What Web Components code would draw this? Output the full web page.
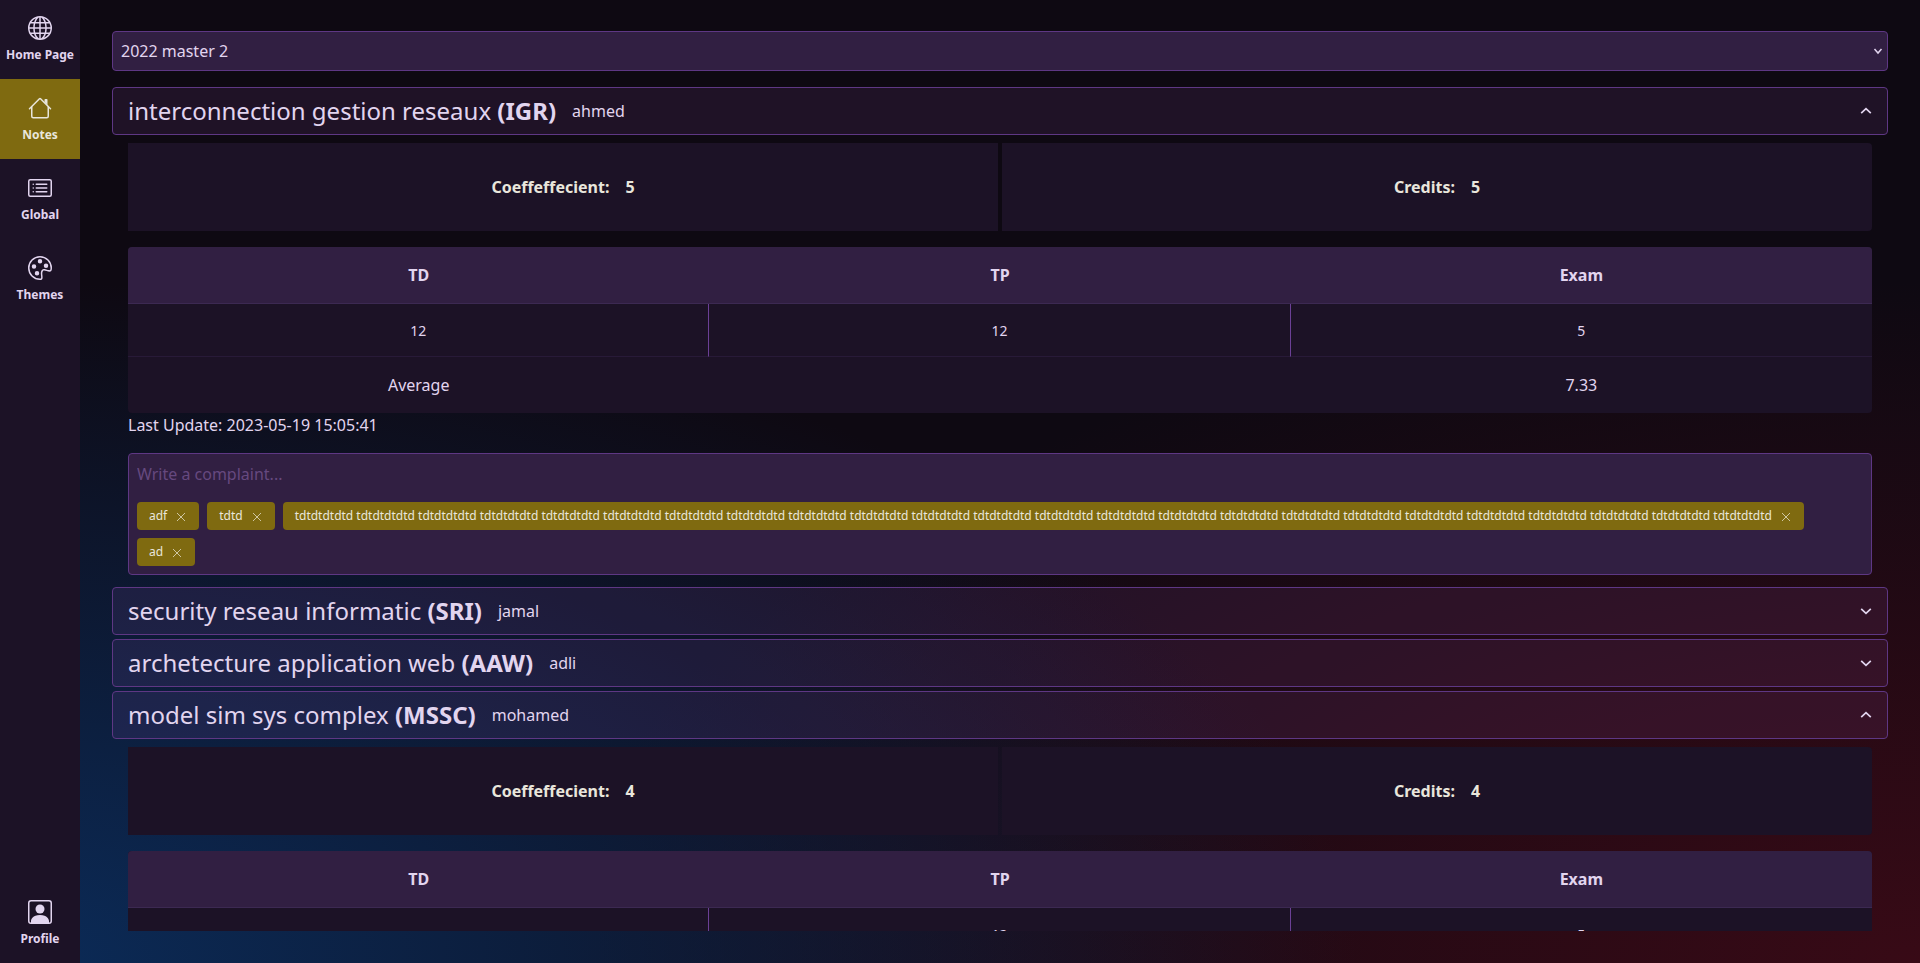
<!DOCTYPE html>
<html lang="en">
<head>
<meta charset="utf-8">
<title>Notes</title>
<style>
html, body { margin: 0; height: 100%; }
body {
  --panel: #1c1226;
  --raised: #311f42;
  --line: #5e3784;
  --accent: #7f6a10;
  --ink: #e2d5ef;
  --ink-light: #e9e6dc;
  font-family: "Noto Sans", sans-serif;
  font-size: 16px;
  line-height: 24px;
  color: var(--ink);
}
</style>
</head>
<body>
<notes-app></notes-app>
<script>
const ICONS = {
  globe: '<path d="M0 8a8 8 0 1 1 16 0A8 8 0 0 1 0 8zm7.5-6.923c-.67.204-1.335.82-1.887 1.855A7.97 7.97 0 0 0 5.145 4H7.5V1.077zM4.09 4a9.267 9.267 0 0 1 .64-1.539 6.7 6.7 0 0 1 .597-.933A7.025 7.025 0 0 0 2.255 4H4.09zm-.582 3.5c.03-.877.138-1.718.312-2.5H1.674a6.958 6.958 0 0 0-.656 2.5h2.49zM4.847 5a12.5 12.5 0 0 0-.338 2.5H7.5V5H4.847zM8.5 5v2.5h2.99a12.495 12.495 0 0 0-.337-2.5H8.5zM4.51 8.5a12.5 12.5 0 0 0 .337 2.5H7.5V8.5H4.51zm3.99 0V11h2.653c.187-.765.306-1.608.338-2.5H8.5zM5.145 12c.138.386.295.744.468 1.068.552 1.035 1.218 1.65 1.887 1.855V12H5.145zm.182 2.472a6.696 6.696 0 0 1-.597-.933A9.268 9.268 0 0 1 4.09 12H2.255a7.024 7.024 0 0 0 3.072 2.472zM3.82 11a13.652 13.652 0 0 1-.312-2.5h-2.49c.062.89.291 1.733.656 2.5H3.82zm6.853 3.472A7.024 7.024 0 0 0 13.745 12H11.91a9.27 9.27 0 0 1-.64 1.539 6.688 6.688 0 0 1-.597.933zM8.5 12v2.923c.67-.204 1.335-.82 1.887-1.855.173-.324.33-.682.468-1.068H8.5zm3.68-1h2.146c.365-.767.594-1.61.656-2.5h-2.49a13.65 13.65 0 0 1-.312 2.5zm2.802-3.5a6.959 6.959 0 0 0-.656-2.5H12.18c.174.782.282 1.623.312 2.5h2.49zM11.27 2.461c.247.464.462.98.64 1.539h1.835a7.024 7.024 0 0 0-3.072-2.472c.218.284.418.598.597.933zM10.855 4a7.966 7.966 0 0 0-.468-1.068C9.835 1.897 9.17 1.282 8.5 1.077V4h2.355z"/>',
  house: '<path fill-rule="evenodd" d="M2 13.5V7h1v6.5a.5.5 0 0 0 .5.5h9a.5.5 0 0 0 .5-.5V7h1v6.5a1.5 1.5 0 0 1-1.5 1.5h-9A1.5 1.5 0 0 1 2 13.5zm11-11V6l-2-2V2.500a.5.5 0 0 1 .5-.5h1a.5.5 0 0 1 .5.5z"/><path fill-rule="evenodd" d="M7.293 1.500a1 1 0 0 1 1.414 0l6.647 6.646a.5.5 0 0 1-.708.708L8 2.207 1.354 8.854a.5.5 0 1 1-.708-.708L7.293 1.500z"/>',
  list: '<path d="M14.500 3a.5.5 0 0 1 .5.5v9a.5.5 0 0 1-.5.5h-13a.5.5 0 0 1-.5-.5v-9a.5.5 0 0 1 .5-.5h13zm-13-1A1.500 1.500 0 0 0 0 3.500v9A1.500 1.500 0 0 0 1.500 14h13a1.500 1.500 0 0 0 1.500-1.500v-9A1.500 1.500 0 0 0 14.500 2h-13z"/><path d="M5 8a.5.5 0 0 1 .5-.5h7a.5.5 0 0 1 0 1h-7A.5.5 0 0 1 5 8zm0-2.500a.5.5 0 0 1 .5-.5h7a.5.5 0 0 1 0 1h-7a.5.5 0 0 1-.5-.5zm0 5a.5.5 0 0 1 .5-.5h7a.5.5 0 0 1 0 1h-7a.5.5 0 0 1-.5-.5zm-1-5a.5.5 0 1 1-1 0 .5.5 0 0 1 1 0zM4 8a.5.5 0 1 1-1 0 .5.5 0 0 1 1 0zm0 2.500a.5.5 0 1 1-1 0 .5.5 0 0 1 1 0z"/>',
  palette: '<path d="M8 5a1.500 1.500 0 1 0 0-3 1.500 1.500 0 0 0 0 3zm4 3a1.500 1.500 0 1 0 0-3 1.500 1.500 0 0 0 0 3zM5.500 7a1.500 1.500 0 1 1-3 0 1.500 1.500 0 0 1 3 0zm.5 6a1.500 1.500 0 1 0 0-3 1.500 1.500 0 0 0 0 3z"/><path d="M16 8c0 3.150-1.866 2.585-3.567 2.070C11.420 9.763 10.465 9.473 10 10c-.603.683-.475 1.819-.351 2.920C9.826 14.495 9.996 16 8 16a8 8 0 1 1 8-8zm-8 7c.611 0 .654-.171.655-.176.078-.146.124-.464.070-1.119-.014-.168-.037-.370-.061-.591-.052-.464-.112-1.005-.118-1.462-.010-.707.083-1.610.704-2.314.369-.417.845-.578 1.272-.618.404-.038.812.026 1.160.104.343.077.702.186 1.025.284l.028.008c.346.105.658.199.953.266.653.148.904.083.991.024C14.717 9.380 15 9.161 15 8a7 7 0 1 0-7 7z"/>',
  person: '<path d="M11 6a3 3 0 1 1-6 0 3 3 0 0 1 6 0z"/><path d="M2 0a2 2 0 0 0-2 2v12a2 2 0 0 0 2 2h12a2 2 0 0 0 2-2V2a2 2 0 0 0-2-2H2zm12 1a1 1 0 0 1 1 1v12a1 1 0 0 1-1 1v-1c0-1-1-4-6-4s-6 3-6 4v1a1 1 0 0 1-1-1V2a1 1 0 0 1 1-1h12z"/>'
};

const define = (name, render, ready) => customElements.define(name, class extends HTMLElement {
  connectedCallback() {
    if (this.shadowRoot) return;
    this.attachShadow({ mode: 'open' }).innerHTML = render(this);
    if (ready) ready(this, this.shadowRoot);
  }
});

define('nav-item', el => `
<style>
:host { display: block; }
a {
  box-sizing: border-box; height: 80px; padding-top: 17px;
  display: flex; flex-direction: column; align-items: center; gap: 7px;
  color: var(--ink); text-decoration: none; font-size: 12px; line-height: 16px; font-weight: 700; white-space: nowrap;
}
:host([active]) a { background: var(--accent); color: var(--ink-light); }
svg { width: 24px; height: 24px; display: block; }
</style>
<a href="#${el.getAttribute('icon')}"><svg viewBox="0 0 16 16" fill="currentColor" aria-hidden="true">${ICONS[el.getAttribute('icon')]}</svg><slot></slot></a>`);

define('side-nav', () => `
<style>
:host { display: block; flex: none; width: 80px; background: var(--panel); }
nav { height: 100%; display: flex; flex-direction: column; justify-content: space-between; }
div { margin-top: -1px; }
</style>
<nav aria-label="Main"><div><slot></slot></div><slot name="end"></slot></nav>`);

define('year-select', () => `
<style>
:host { display: grid; align-items: center; }
select, svg { grid-area: 1 / 1; }
select {
  appearance: none; box-sizing: border-box; width: 100%; height: 40px; margin: 0; padding: 0 24px 0 8px;
  font: inherit; color: var(--ink); background: var(--raised);
  border: 1px solid var(--line); border-radius: 4px;
}
svg { width: 10px; height: 10px; margin-right: 5px; justify-self: end; pointer-events: none; fill: none; stroke: var(--ink); stroke-width: 1.5; }
</style>
<select aria-label="Year"><option>2022 master 2</option></select>
<svg viewBox="0 0 10 10" aria-hidden="true"><path d="M1.500 3 5 7l3.500-4"/></svg>`);

define('course-panel', el => `
<style>
:host { display: block; }
button {
  box-sizing: border-box; width: 100%; height: 48px; margin: 0; padding: 0 15px;
  display: flex; align-items: center; gap: 16px;
  font: inherit; color: inherit; text-align: left;
  background: rgba(190, 100, 215, .1); border: 1px solid var(--line); border-radius: 4px;
}
.title { font-size: 24px; line-height: 34px; }
svg { width: 12px; height: 12px; margin-left: auto; fill: none; stroke: currentColor; stroke-width: 1.7; }
:host([open]) svg { transform: rotate(180deg); }
.body { display: none; padding: 8px 16px; }
:host([open]) .body { display: block; }
</style>
<button type="button" aria-expanded="${el.hasAttribute('open')}">
  <span class="title">${el.getAttribute('name')} <b>(${el.getAttribute('code')})</b></span>
  <span>${el.getAttribute('teacher')}</span>
  <svg viewBox="0 0 12 12" aria-hidden="true"><path d="M1.200 3.800 6 8.300l4.800-4.500"/></svg>
</button>
<div class="body"><slot></slot></div>`,
(el, root) => root.querySelector('button').addEventListener('click', e => {
  e.currentTarget.setAttribute('aria-expanded', el.toggleAttribute('open'));
}));

define('course-facts', el => `
<style>
:host { display: grid; grid-template-columns: 1fr 1fr; gap: 4px; margin-bottom: 16px; }
div {
  padding: 32px 0; display: flex; justify-content: center; gap: 16px;
  background: var(--panel); color: var(--ink-light); font-weight: 700;
}
div:first-child { border-radius: 4px 0 0 4px; }
div:last-child { border-radius: 0 4px 4px 0; }
</style>
<div><span>Coeffeffecient:</span><span>${el.getAttribute('coefficient')}</span></div>
<div><span>Credits:</span><span>${el.getAttribute('credits')}</span></div>`);

define('marks-table', el => `
<style>
:host { display: block; border-radius: 4px; overflow: hidden; }
table { width: 100%; table-layout: fixed; border-collapse: separate; border-spacing: 0; text-align: center; background: var(--panel); }
th, td { padding: 16px 0; }
th { background: var(--raised); border-bottom: 1px solid #3c2952; font-weight: 700; }
tbody td { padding: 16px 0 15px; font-size: 14px; line-height: 21px; border-bottom: 1px solid #281a38; }
tbody td:not(:last-child) { border-right: 1px solid #6b4096; }
</style>
<table>
<thead><tr><th>TD</th><th>TP</th><th>Exam</th></tr></thead>
<tbody><tr><td>${el.getAttribute('td')}</td><td>${el.getAttribute('tp')}</td><td>${el.getAttribute('exam')}</td></tr></tbody>
<tfoot><tr><td>Average</td><td></td><td>${el.getAttribute('average')}</td></tr></tfoot>
</table>`);

define('complaint-chip', () => `
<style>
:host {
  box-sizing: border-box; height: 28px; padding: 0 12px; display: flex; align-items: center; gap: 8px;
  background: var(--accent); border-radius: 4px; color: var(--ink-light);
  font-size: 12px; line-height: 18px; white-space: nowrap;
}
button { display: block; width: 12px; height: 12px; padding: 0; border: 0; background: none; color: #cfc6a0; }
svg { display: block; width: 12px; height: 12px; stroke: currentColor; }
</style>
<slot></slot><button type="button" aria-label="Remove"><svg viewBox="0 0 12 12" aria-hidden="true"><path d="M2 3l8 8M10 3l-8 8"/></svg></button>`,
(el, root) => root.querySelector('button').addEventListener('click', () => el.remove()));

define('complaint-box', () => `
<style>
:host { display: block; margin-top: 16px; background: var(--raised); border: 1px solid var(--line); border-radius: 4px; padding: 0 8px 8px; }
input {
  display: block; box-sizing: border-box; width: 100%; height: 40px; margin: 0 0 8px; padding: 0;
  border: 0; outline: 0; background: none; font: inherit; color: inherit;
}
input::placeholder { color: #66497f; opacity: 1; }
div { display: flex; flex-wrap: wrap; gap: 8px; }
</style>
<input type="text" aria-label="Complaint" placeholder="Write a complaint...">
<div><slot></slot></div>`);

define('notes-app', () => `
<style>
:host {
  display: flex; height: 100vh;
  background:
    radial-gradient(at 0% 100%, #0b2b58 0, transparent 50%),
    radial-gradient(at 100% 100%, #380a16 0, transparent 50%),
    #0e0912;
}
main { flex: 1; min-width: 0; box-sizing: border-box; padding: 31px 32px 32px; }
.scroll { height: 100%; overflow: hidden; }
.courses { margin-top: 16px; display: flex; flex-direction: column; gap: 4px; }
p { margin: 0; }
</style>
<side-nav>
  <nav-item icon="globe">Home Page</nav-item>
  <nav-item icon="house" active>Notes</nav-item>
  <nav-item icon="list">Global</nav-item>
  <nav-item icon="palette">Themes</nav-item>
  <nav-item icon="person" slot="end">Profile</nav-item>
</side-nav>
<main><div class="scroll">
  <year-select></year-select>
  <div class="courses">
    <course-panel name="interconnection gestion reseaux" code="IGR" teacher="ahmed" open>
      <course-facts coefficient="5" credits="5"></course-facts>
      <marks-table td="12" tp="12" exam="5" average="7.33"></marks-table>
      <p>Last Update: 2023-05-19 15:05:41</p>
      <complaint-box>
        <complaint-chip>adf</complaint-chip>
        <complaint-chip>tdtd</complaint-chip>
        <complaint-chip>${Array(24).fill('tdtdtdtdtd').join(' ')}</complaint-chip>
        <complaint-chip>ad</complaint-chip>
      </complaint-box>
    </course-panel>
    <course-panel name="security reseau informatic" code="SRI" teacher="jamal"></course-panel>
    <course-panel name="archetecture application web" code="AAW" teacher="adli"></course-panel>
    <course-panel name="model sim sys complex" code="MSSC" teacher="mohamed" open>
      <course-facts coefficient="4" credits="4"></course-facts>
      <marks-table td="" tp="12" exam="5" average=""></marks-table>
    </course-panel>
  </div>
</div></main>`);
</script>
</body>
</html>
